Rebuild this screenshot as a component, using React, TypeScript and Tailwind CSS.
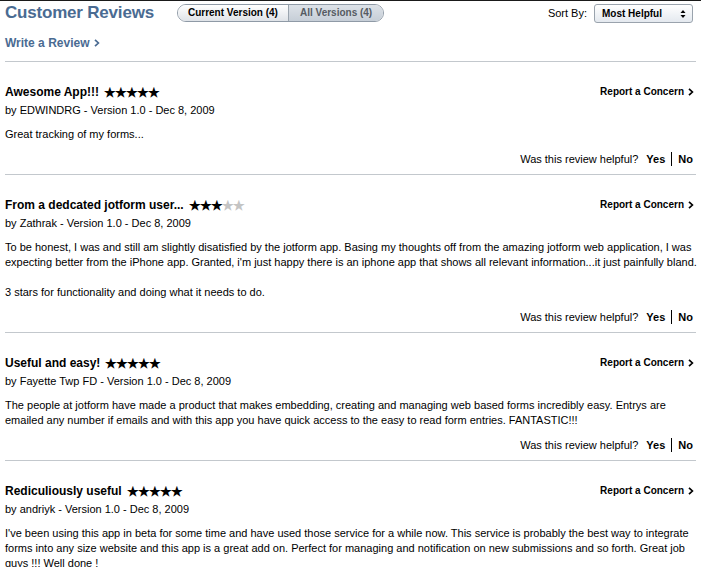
import React from "react";

type Review = {
  title: string;
  stars: number;
  author: string;
  body: string[][];
};

const reviews: Review[] = [
  {
    title: "Awesome App!!!",
    stars: 5,
    author: "EDWINDRG",
    body: [["Great tracking of my forms..."]],
  },
  {
    title: "From a dedcated jotform user...",
    stars: 3,
    author: "Zathrak",
    body: [
      [
        "To be honest, I was and still am slightly disatisfied by the jotform app. Basing my thoughts off from the amazing jotform web application, I was",
        "expecting better from the iPhone app. Granted, i'm just happy there is an iphone app that shows all relevant information...it just painfully bland.",
      ],
      ["3 stars for functionality and doing what it needs to do."],
    ],
  },
  {
    title: "Useful and easy!",
    stars: 5,
    author: "Fayette Twp FD",
    body: [
      [
        "The people at jotform have made a product that makes embedding, creating and managing web based forms incredibly easy. Entrys are",
        "emailed any number if emails and with this app you have quick access to the easy to read form entries. FANTASTIC!!!",
      ],
    ],
  },
  {
    title: "Rediculiously useful",
    stars: 5,
    author: "andriyk",
    body: [
      [
        "I've been using this app in beta for some time and have used those service for a while now. This service is probably the best way to integrate",
        "forms into any size website and this app is a great add on. Perfect for managing and notification on new submissions and so forth. Great job",
        "guys !!! Well done !",
      ],
    ],
  },
];

function Chevron({ className = "" }: { className?: string }) {
  return (
    <svg width="6" height="8" viewBox="0 0 6 8" className={className}>
      <path d="M1 0.8 L4.4 4 L1 7.2" fill="none" stroke="currentColor" strokeWidth="1.7" />
    </svg>
  );
}

function Stars({ n }: { n: number }) {
  return (
    <span className="ml-[5px] text-[13px] leading-none tracking-[-1px]">
      {[0, 1, 2, 3, 4].map((i) => (
        <span key={i} className={i < n ? "text-black" : "text-[#c4c4c4]"}>
          ★
        </span>
      ))}
    </span>
  );
}

function ReviewBlock({ r, last }: { r: Review; last: boolean }) {
  return (
    <div className={`pt-[22px] ${last ? "" : "border-b border-[#c3c8cd] pb-[8px]"}`}>
      <div className="flex items-start justify-between">
        <div className="flex items-center text-[12px] font-bold leading-[16px] text-black">
          <span>{r.title}</span>
          <Stars n={r.stars} />
        </div>
        <div className="mt-[1px] mr-[2px] flex items-center gap-[4px] text-[10px] font-bold leading-[14px] text-black">
          <span>Report a Concern</span>
          <Chevron />
        </div>
      </div>
      <div className="mt-[3px] text-[11px] leading-[14px] text-black">
        by {r.author} - Version 1.0 - Dec 8, 2009
      </div>
      <div className="mt-[10px] text-[11px] leading-[15px] text-black">
        {r.body.map((p, i) => (
          <p key={i} className={i > 0 ? "mt-[15px]" : ""}>
            {p.map((line, j) => (
              <span key={j} className="block whitespace-nowrap">
                {line}
              </span>
            ))}
          </p>
        ))}
      </div>
      {!last && (
        <div className="mt-[10px] flex items-center justify-end pr-[3px] text-[11px] leading-[14px] text-black">
          <span>Was this review helpful?</span>
          <span className="ml-[8px] font-bold">Yes</span>
          <span className="mx-[6px] inline-block h-[14px] w-px bg-black" />
          <span className="font-bold">No</span>
        </div>
      )}
    </div>
  );
}

export default function App() {
  return (
    <div
      className="relative h-[567px] w-[701px] overflow-hidden bg-white"
      style={{ fontFamily: '"Liberation Sans", Arial, sans-serif' }}
    >
      <div className="h-px w-full bg-[#1a1a1a]" />
      <div className="px-[5px]">
        <div className="flex items-center justify-between pt-[2px]">
          <div className="flex items-center">
            <h1 className="text-[17px] font-bold leading-[20px] tracking-[-0.2px] text-[#4a6b92]">
              Customer Reviews
            </h1>
            <div className="ml-[23px] flex h-[18px] overflow-hidden rounded-full border border-[#8f9aa6] text-[10px] font-bold leading-none">
              <div className="flex items-center bg-gradient-to-b from-white to-[#dfe3e8] px-[10px] text-black">
                Current Version (4)
              </div>
              <div className="flex items-center border-l border-[#9aa4ae] bg-gradient-to-b from-[#dde2e8] to-[#c6ced7] px-[11px] text-[#555b62]">
                All Versions (4)
              </div>
            </div>
          </div>
          <div className="mt-[1px] flex items-center">
            <span className="text-[11px] text-black">Sort By:</span>
            <div className="ml-[7px] mr-[3px] flex h-[19px] w-[99px] items-center justify-between rounded-[3px] border border-[#9aa3ad] bg-gradient-to-b from-white to-[#e4e9ef] pl-[7px] pr-[6px] text-[10px] font-bold text-black">
              <span>Most Helpful</span>
              <svg width="6" height="10" viewBox="0 0 6 10">
                <path d="M0.5 4 L3 1 L5.5 4 Z" fill="#000" />
                <path d="M0.5 6 L3 9 L5.5 6 Z" fill="#000" />
              </svg>
            </div>
          </div>
        </div>
        <div className="mt-[12px] flex items-center gap-[5px] text-[12px] font-bold leading-[16px] text-[#4a6b92]">
          <span>Write a Review</span>
          <Chevron />
        </div>
        <div className="mt-[10px] h-px w-full bg-[#c3c8cd]" />
        {reviews.map((r, i) => (
          <ReviewBlock key={i} r={r} last={i === reviews.length - 1} />
        ))}
      </div>
    </div>
  );
}
